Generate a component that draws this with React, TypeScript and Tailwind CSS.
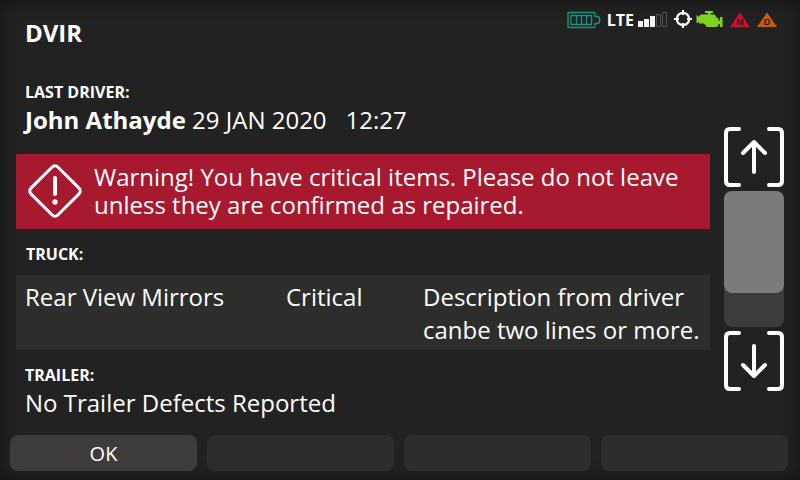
const defects = [
  {
    item: "Rear View Mirrors",
    severity: "Critical",
    description: "Description from driver canbe two lines or more.",
  },
];

const softKeys = ["OK", "", "", ""];

function StatusIcons() {
  return (
    <div className="flex h-5 items-center">
      {/* Battery */}
      <svg width="34" height="20" viewBox="0 0 34 20" fill="none" stroke="#16957a">
        <path d="M1 3.5Q1 2.5 2 2.5H27Q28 2.5 28 3.5V6.5H30.5Q32.5 6.5 32.5 8.5V11.5Q32.5 13.5 30.5 13.5H28V16.5Q28 17.5 27 17.5H2Q1 17.5 1 16.5Z" strokeWidth="1.4" />
        <path d="M4 5.5H24.5V14.5H4ZM9.5 5.5V14.5M14.5 5.5V14.5M19.5 5.5V14.5" strokeWidth="1.3" />
      </svg>

      <span className="ml-1.5 text-base leading-5 font-bold">LTE</span>

      {/* Signal strength */}
      <svg className="ml-1" width="30" height="20" viewBox="0 0 30 20">
        <path d="M0 11H5V17H0ZM6 9H11V17H6ZM12 6H17V17H12Z" fill="#f5f2ef" />
        <path d="M18.5 4.5H22.5V16.5H18.5ZM24.5 2.5H28.5V16.5H24.5Z" fill="none" stroke="#54504c" />
      </svg>

      {/* GPS */}
      <svg className="ml-1.5" width="18" height="20" viewBox="0 0 18 20" fill="none" stroke="#fff">
        <circle cx="9" cy="9" r="6.2" strokeWidth="2.2" />
        <path d="M9 0V5M9 13V18M0 9H5M13 9H18" strokeWidth="2" />
      </svg>

      {/* Engine */}
      <svg className="ml-1" width="28" height="20" viewBox="0 0 28 20" fill="#7ed321">
        <path d="M9 1H17V3H14.500V4.500H18.500L20.500 7V8H22.500V10.500H24V7H26.500V17H24V14H22.500V15.500L20.500 17H11L8 13.500H3V12H2V13H0.500V5.500H2V6.500H3L4.500 4.500H12V3H9Z" />
      </svg>

      <svg className="ml-1.5" width="20" height="20" viewBox="0 0 20 20">
        <path d="M10 2.500L20 17H0Z" fill="#c8102e" />
        <text x="10" y="15" fontSize="9" fontWeight="700" fontFamily="Liberation Sans, sans-serif" textAnchor="middle" fill="#222">
          M
        </text>
      </svg>
      <svg className="ml-[7px]" width="20" height="20" viewBox="0 0 20 20">
        <path d="M10 2.500L20 17H0Z" fill="#c55a11" />
        <text x="10" y="15" fontSize="9" fontWeight="700" fontFamily="Liberation Sans, sans-serif" textAnchor="middle" fill="#222">
          D
        </text>
      </svg>
    </div>
  );
}

function ScrollButton({ direction }: { direction: "up" | "down" }) {
  return (
    <button type="button" aria-label={`Scroll ${direction}`} className="block">
      <svg
        width="60"
        height="60"
        viewBox="0 0 60 60"
        fill="none"
        stroke="#fff"
        strokeWidth="4"
        strokeLinecap="round"
        strokeLinejoin="round"
      >
        <path d="M15 2H6Q2 2 2 6V54Q2 58 6 58H15M45 2H54Q58 2 58 6V54Q58 58 54 58H45" />
        {direction === "up" ? (
          <path d="M30 45V15M19 26L30 15L41 26" />
        ) : (
          <path d="M30 15V45M19 34L30 45L41 34" />
        )}
      </svg>
    </button>
  );
}

export default function App() {
  return (
    <div className="flex min-h-screen flex-col bg-[#222222] font-['Open_Sans',sans-serif] text-white shadow-[inset_0_0_16px_#111111]">
      <header className="flex items-start justify-between pt-2.5 pr-[23px] pl-[25px]">
        <h1 className="mt-[7px] text-2xl leading-8 font-bold">DVIR</h1>
        <StatusIcons />
      </header>

      <div className="flex flex-1 gap-3.5 px-4">
        <main className="min-w-0 flex-1 pt-[33px] pb-4">
          <section className="px-[9px]">
            <h2 className="text-base leading-5 font-bold">LAST DRIVER:</h2>
            <p className="mt-0.5 text-2xl leading-8">
              <strong className="font-bold">John Athayde</strong> 29 JAN 2020
              <span className="ml-[19px]">12:27</span>
            </p>
          </section>

          {/* Critical warning */}
          <div role="alert" className="mt-[18px] flex items-center gap-3 bg-[#a6192e] pt-[9px] pr-4 pb-2.5 pl-3">
            <svg
              className="shrink-0"
              width="54"
              height="54"
              viewBox="0 0 54 54"
              fill="none"
              stroke="#fff"
              strokeWidth="3"
              strokeLinecap="round"
            >
              <rect x="8" y="8" width="38" height="38" rx="4" transform="rotate(45 27 27)" />
              <path d="M27 14V30" strokeWidth="4" />
              <circle cx="27" cy="38" r="2.7" fill="#fff" stroke="none" />
            </svg>
            <p className="text-2xl leading-7">
              Warning! You have critical items. Please do not leave unless they
              are confirmed as repaired.
            </p>
          </div>

          <section>
            <h2 className="mt-[15px] px-2.5 text-base leading-5 font-bold">TRUCK:</h2>
            <table className="mt-[11px] w-full table-fixed bg-[#2d2d2b] text-left text-2xl leading-[33px]">
              <tbody>
                {defects.map((defect) => (
                  <tr key={defect.item} className="align-top">
                    <td className="w-[270px] pt-[5px] pb-1 pl-[9px]">{defect.item}</td>
                    <td className="w-[137px] pt-[5px] pb-1">{defect.severity}</td>
                    <td className="pt-[5px] pb-1">{defect.description}</td>
                  </tr>
                ))}
              </tbody>
            </table>
          </section>

          <section className="mt-[15px] px-[9px]">
            <h2 className="text-base leading-5 font-bold">TRAILER:</h2>
            <p className="mt-0.5 text-2xl leading-8">No Trailer Defects Reported</p>
          </section>
        </main>

        <aside className="mt-[78px] mb-11 flex w-[60px] shrink-0 flex-col gap-1">
          <ScrollButton direction="up" />
          <div className="flex-1 rounded-lg bg-[#3c3c3c]">
            <div className="h-3/4 rounded-lg bg-[#7b7b7b]" />
          </div>
          <ScrollButton direction="down" />
        </aside>
      </div>

      <footer className="grid grid-cols-4 gap-2.5 pr-3 pb-[9px] pl-2.5">
        {softKeys.map((label, i) => (
          <button
            key={i}
            type="button"
            disabled={!label}
            aria-label={label || `Soft key ${i + 1}`}
            className={`h-9 rounded-lg pt-0.5 text-xl ${label ? "bg-[#3d3c3a]" : "bg-[#2d2d2b]"}`}
          >
            {label}
          </button>
        ))}
      </footer>
    </div>
  );
}
